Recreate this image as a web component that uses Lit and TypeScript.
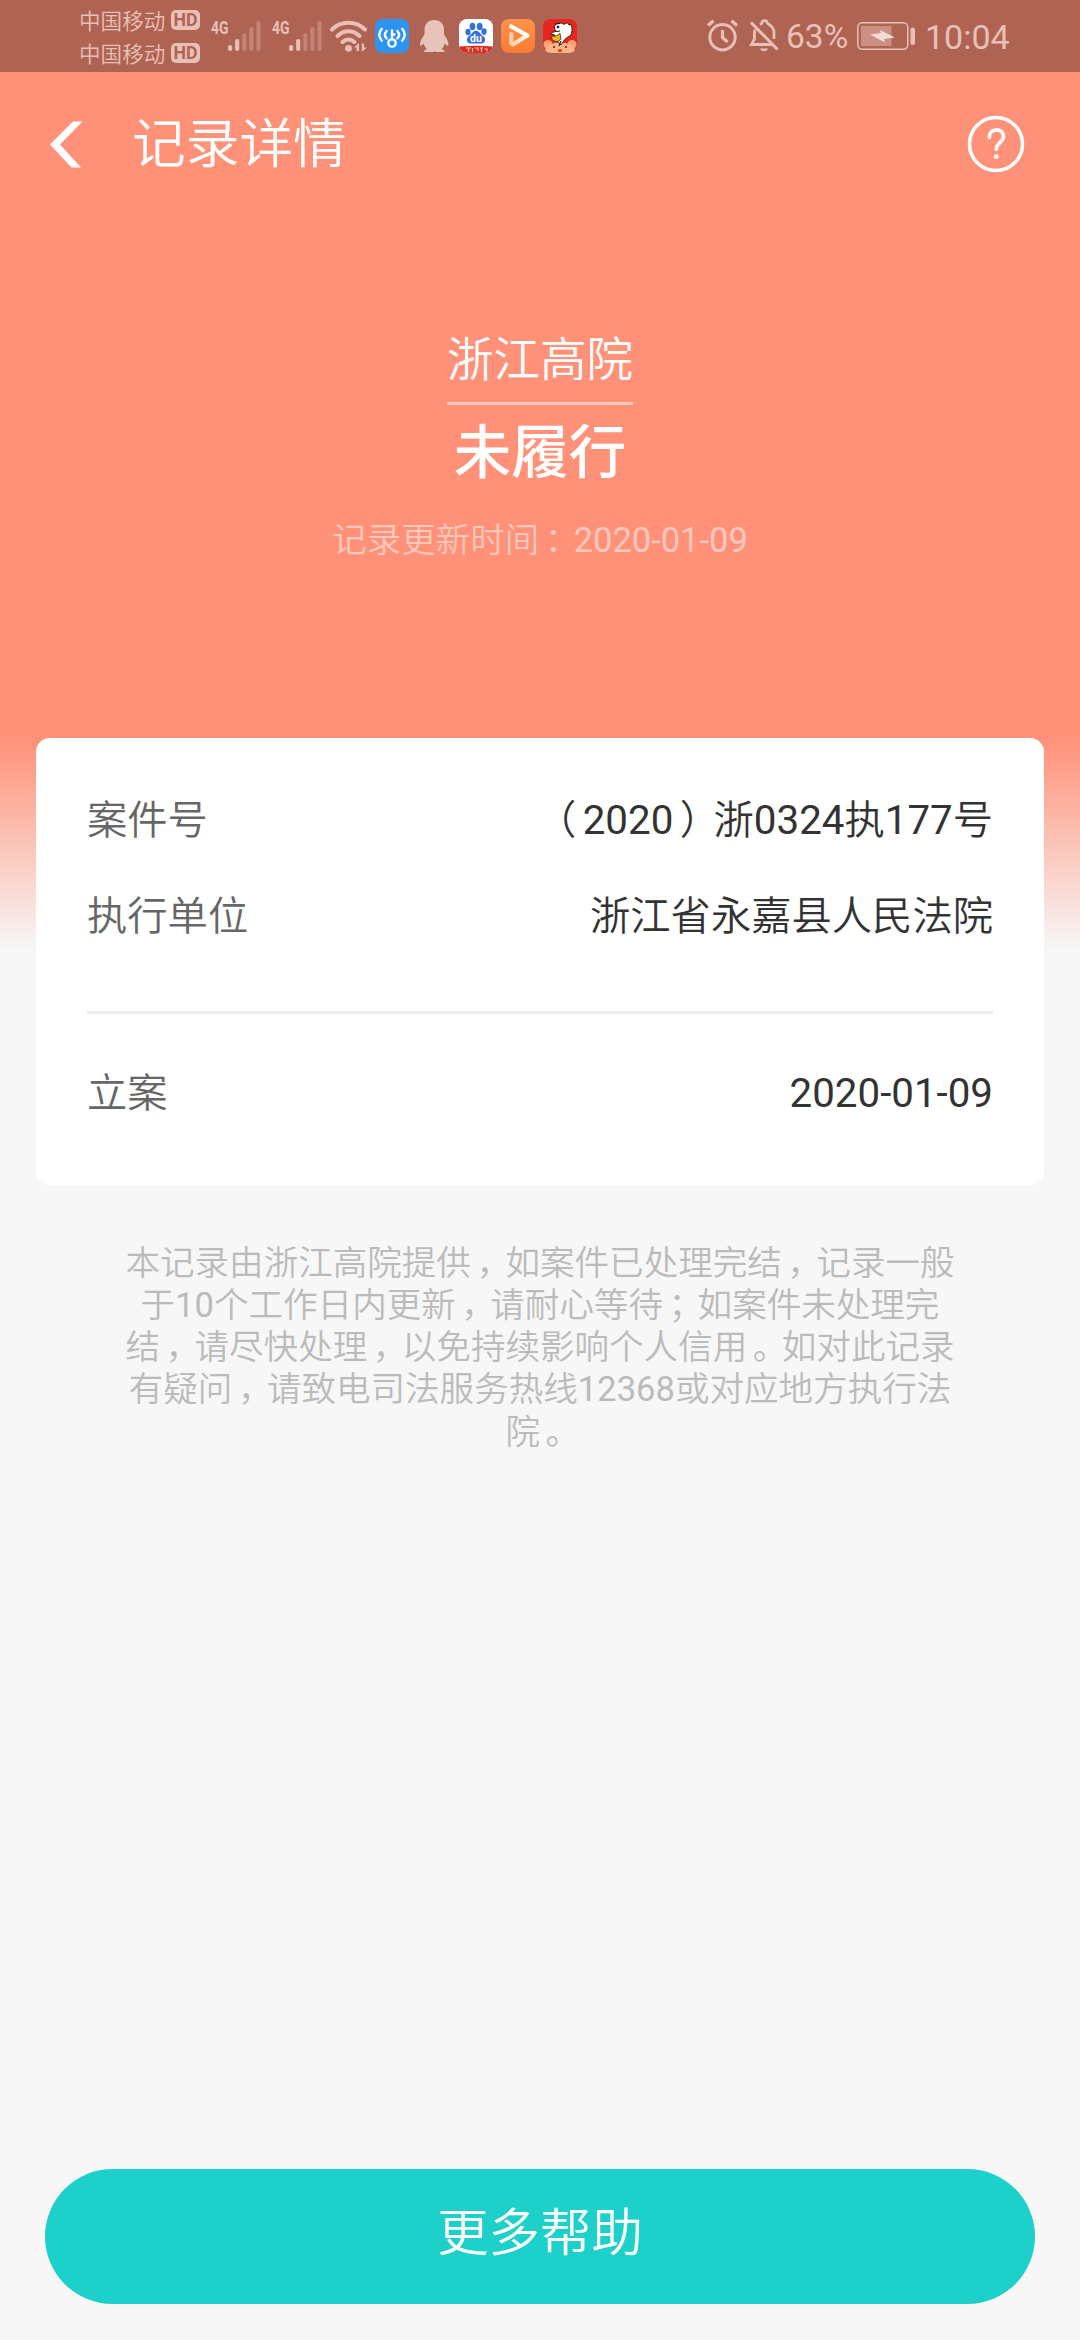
import { LitElement, html, css, svg } from 'lit';
import { customElement, property } from 'lit/decorators.js';

const SIGNAL_BARS = [6, 12, 18, 24, 30];

const NOTE_LINES = [
    '本记录由浙江高院提供，如案件已处理完结，记录一般',
    '于10个工作日内更新，请耐心等待；如案件未处理完',
    '结，请尽快处理，以免持续影响个人信用。如对此记录',
    '有疑问，请致电司法服务热线12368或对应地方执行法',
    '院。',
];

@customElement('status-bar')
export class StatusBar extends LitElement {
    static styles = css`
        :host {
            display: flex;
            align-items: center;
            box-sizing: border-box;
            height: 72px;
            padding: 0 70px 0 79px;
            background: #ae6353;
            color: #e9c0b6;
            font-family: Roboto, "Noto Sans CJK SC", sans-serif;
        }
        svg {
            display: block;
            flex: none;
            overflow: visible;
        }
        .carriers {
            display: flex;
            flex-direction: column;
            width: 132px;
        }
        .carrier {
            display: flex;
            align-items: center;
            gap: 6px;
            height: 33px;
            font-family: "Noto Sans CJK SC DemiLight", "Noto Sans CJK SC", sans-serif;
            font-size: 21.6px;
            line-height: 33px;
            white-space: nowrap;
        }
        .signal {
            margin-right: 11px;
        }
        .wifi {
            margin: 0 8px 0 -3px;
        }
        .app {
            margin-right: 8px;
        }
        .spacer {
            flex: 1;
        }
        .alarm {
            margin-right: 12px;
        }
        .bell {
            margin-right: 7px;
        }
        .percent {
            width: 71px;
            font-size: 33.5px;
            line-height: 72px;
            padding-top: 2px;
        }
        .battery {
            margin-right: 9px;
        }
        .time {
            width: 85px;
            font-size: 34px;
            line-height: 72px;
            padding-top: 2px;
        }
        .badge-text {
            font-family: Roboto, sans-serif;
            font-weight: 700;
        }
    `;

    renderCarrier() {
        return html`
            <div class="carrier">
                <span>中国移动</span>
                <svg width="29" height="20" viewBox="0 0 29 20">
                    <rect width="29" height="20" rx="5" fill="#e9c0b6" />
                    <text class="badge-text" x="14.5" y="16.2" font-size="17.5" text-anchor="middle" textLength="24" lengthAdjust="spacingAndGlyphs" fill="#ae6353">HD</text>
                </svg>
            </div>
        `;
    }

    renderSignal() {
        return html`
            <svg class="signal" width="50" height="34" viewBox="0 0 50 34">
                <text class="badge-text" x="0" y="15" font-size="18.5" textLength="17.5" lengthAdjust="spacingAndGlyphs" fill="#e9c0b6">4G</text>
                ${SIGNAL_BARS.map((h, i) => svg`
                    <rect x=${17 + i * 7.1} y=${32 - h} width="4.2" height=${h} rx="2" fill=${i < 2 ? '#e9c0b6' : '#c38375'} />
                `)}
            </svg>
        `;
    }

    render() {
        return html`
            <div class="carriers">
                ${this.renderCarrier()}
                ${this.renderCarrier()}
            </div>
            ${this.renderSignal()}
            ${this.renderSignal()}
            <svg class="wifi" width="37" height="34" viewBox="0 0 37 34" fill="none" stroke="#e9c0b6" stroke-width="4" stroke-linecap="round">
                <path d="M2 10.500C11 1.500 26 1.500 35 10.500" />
                <path d="M7.500 17C14 10.500 23 10.500 29.500 17" />
                <path d="M12.500 23C16 19.500 21 19.500 24.500 23" />
                <circle cx="18.500" cy="29.300" r="3.400" fill="#e9c0b6" stroke="none" />
                <path d="M24 28.500L29 24V32H26.600V28.500ZM37 28.500L31.800 32.800V24.500H34V28.500Z" fill="#e9c0b6" stroke="none" />
            </svg>
            <svg class="app" width="34" height="34" viewBox="0 0 34 34">
                <rect width="34" height="34" rx="8" fill="#2e94f2" />
                <g fill="none" stroke="#fff" stroke-width="2.300" stroke-linecap="round">
                    <circle cx="17" cy="24" r="3.700" />
                    <path d="M17 20V11.500M17 15.500H19.500M11.700 12C9.300 14.500 9.300 17 11.700 19.500M22.300 12C24.700 14.500 24.700 17 22.300 19.500M6.800 9.800C3.700 13.500 3.700 18 6.800 21.700M27.200 9.800C30.300 13.500 30.300 18 27.200 21.700" />
                </g>
            </svg>
            <svg class="app" width="34" height="34" viewBox="0 0 34 34">
                <path d="M17.200 1C10.500 1 7.500 5.500 7.500 11V15.500C5.500 18 3.200 22 3 25.500C3 27.500 4.200 27 6.800 24.500C7.300 26.800 8.300 28.700 10 30C8 30.800 7 31.500 7 33H17L18 32L19 33H27.500C27.500 31.500 26.400 30.800 24.500 30C26.200 28.700 27.200 26.800 27.700 24.500C30 27 31.500 27.500 31.500 25.500C31.300 22 29 18 27 15.500V11C27 5.500 24 1 17.200 1Z" fill="#e6c3bb" />
            </svg>
            <svg class="app" width="34" height="34" viewBox="0 0 34 34">
                <clipPath id="tile"><rect width="34" height="34" rx="8" /></clipPath>
                <g clip-path="url(#tile)">
                    <rect width="34" height="34" fill="#fff" />
                    <g fill="#3370d8">
                        <ellipse cx="13.500" cy="7.500" rx="2.900" ry="3.700" />
                        <ellipse cx="20.700" cy="7.500" rx="2.900" ry="3.700" />
                        <ellipse cx="9" cy="13" rx="2.600" ry="3.300" />
                        <ellipse cx="25" cy="12.600" rx="2.600" ry="3.300" />
                        <path d="M17 11.800C20 11.800 21 15 24 17C27.500 19.500 26.500 24.500 22 24.500H12C7.500 24.500 6.500 19.500 10 17C13 15 14 11.800 17 11.800Z" />
                    </g>
                    <text class="badge-text" x="17" y="23" font-size="10.500" text-anchor="middle" fill="#fff">du</text>
                    <path d="M0 27.500Q17 26 34 27.500V34H0Z" fill="#dd2b20" />
                    <path d="M7 29H12M9.500 29V33M13.500 29V33M16 29H19V32M21 29H24M22.500 29V33M25.500 30H28V32.500" stroke="#f6bdb4" stroke-width="1.200" fill="none" />
                </g>
            </svg>
            <svg class="app" width="34" height="34" viewBox="0 0 34 34">
                <defs>
                    <linearGradient id="play" x1="0" y1="0" x2="0" y2="1">
                        <stop offset="0" stop-color="#fc9447" />
                        <stop offset="1" stop-color="#f97b33" />
                    </linearGradient>
                    <linearGradient id="fade" x1="1" y1="0" x2="0" y2="0.600">
                        <stop offset="0" stop-color="#fff" />
                        <stop offset="1" stop-color="#ffd3ae" />
                    </linearGradient>
                </defs>
                <rect width="34" height="34" rx="8" fill="url(#play)" />
                <g fill="none" stroke-width="4.200" stroke-linecap="round" stroke-linejoin="round">
                    <path d="M10.300 15V24.500" stroke="#ffcda6" />
                    <path d="M26 16.500L12 25.500" stroke="url(#fade)" />
                    <path d="M10.300 7.500L26.500 16.500" stroke="#fff" />
                </g>
            </svg>
            <svg width="34" height="34" viewBox="0 0 34 34">
                <clipPath id="shop"><rect width="34" height="34" rx="8" /></clipPath>
                <g clip-path="url(#shop)">
                    <rect width="34" height="34" fill="#e8261f" />
                    <circle cx="5" cy="25.500" r="4.500" fill="#f6a173" />
                    <circle cx="29" cy="25.500" r="4.500" fill="#f6a173" />
                    <ellipse cx="17" cy="31.500" rx="15" ry="8" fill="#fbb583" />
                    <path d="M12 6C15 3.500 19 3.500 21 5.500L24 3.500L26 6L28 5.500C29.500 9 29.500 14 27 17C23 18.500 21 21 18 26L15 23L11 15.500L7.500 15C8.500 13 11 13 13 12.500C11.500 10.500 11 8 12 6Z" fill="#fff" stroke="#231513" stroke-width="0.900" />
                    <path d="M9 17C12 18 15 16 17 14.500L18 20L15 22.500C11 23 7.500 20.500 9 17Z" fill="#f4b41f" stroke="#3b2415" stroke-width="0.800" />
                    <circle cx="15" cy="8" r="1.300" fill="#231513" />
                    <path d="M12 5L17 4.500M13 12.500L17 12M18 22L16 27" stroke="#231513" stroke-width="1.100" />
                    <circle cx="11" cy="28" r="1" fill="#552317" />
                    <circle cx="23" cy="28" r="1" fill="#552317" />
                    <ellipse cx="17" cy="31.500" rx="2.200" ry="1.500" fill="#dc3a26" />
                </g>
            </svg>
            <div class="spacer"></div>
            <svg class="alarm" width="31" height="34" viewBox="0 0 31 34" fill="none" stroke="#e9c0b6" stroke-width="3">
                <circle cx="15.500" cy="18.200" r="12.700" />
                <path d="M15.500 11V18.500L20.500 23" stroke-width="3.200" />
                <path d="M1 6.500L6.500 1.700M30 6.500L24.500 1.700" stroke-width="3.400" />
            </svg>
            <svg class="bell" width="29" height="34" viewBox="0 0 29 34" fill="none" stroke="#e9c0b6" stroke-width="3">
                <path d="M1 3.500L27.500 30.500" />
                <path d="M5 10.500C4 13 4.500 17 4.500 20L1.500 25.500H22M10 5.500C11.500 4.500 12 4.500 12 3.500C12 1 17 1 17 3.500C17 5 23 6 24 12.500V20" stroke-width="2.800" />
                <path d="M10 29.500H18C17 33 11 33 10 29.500Z" fill="#e9c0b6" stroke="none" />
            </svg>
            <div class="percent">63%</div>
            <svg class="battery" width="59" height="30" viewBox="0 0 59 30">
                <rect x="0.800" y="1.800" width="50" height="26.500" rx="4.500" fill="none" stroke="#e9c0b6" stroke-width="1.500" />
                <rect x="4" y="5" width="30.500" height="20" fill="#cb9084" />
                <path d="M13 13.500L24 12L23 9L38 16.500L27 18L28 21.500Z" fill="#f2dcd6" />
                <rect x="53.500" y="6.500" width="4.500" height="17.500" rx="2" fill="#e9c0b6" />
            </svg>
            <div class="time">10:04</div>
        `;
    }
}

@customElement('record-row')
export class RecordRow extends LitElement {
    static styles = css`
        :host {
            display: flex;
            justify-content: space-between;
            align-items: center;
            height: 96px;
            font-size: 40.3px;
            line-height: 96px;
        }
        .label {
            color: #666;
        }
        .value {
            color: #333;
        }
    `;

    @property() label = '';

    render() {
        return html`
            <span class="label">${this.label}</span>
            <span class="value"><slot></slot></span>
        `;
    }
}

// full-width punctuation sits nearer the middle of its cell
function spaced(text: string) {
    return text.split(/([，。；：（）])/).map(part => {
        if (part === '（') return html`<span class="open">${part}</span>`;
        if (/^[，。；：）]$/.test(part)) return html`<span class="punct">${part}</span>`;
        return part;
    });
}

@customElement('app-root')
export class AppRoot extends LitElement {
    static styles = css`
        :host {
            display: flex;
            flex-direction: column;
            box-sizing: border-box;
            height: 2340px;
            width: 1080px;
            background: linear-gradient(#ff9178 738px, #f7f7f7 950px);
            font-family: Roboto, "Noto Sans CJK SC DemiLight", "Noto Sans CJK SC", sans-serif;
            font-weight: 400;
            overflow: hidden;
        }
        .nav {
            display: flex;
            align-items: center;
            height: 144px;
            padding: 0 55px 0 50px;
            color: #fff;
        }
        .back {
            width: 33px;
            height: 47px;
            margin-right: 49px;
        }
        .title {
            flex: 1;
            padding-top: 2px;
            font-size: 53.7px;
            line-height: 142px;
        }
        .help {
            width: 58px;
            height: 58px;
        }
        .hero {
            display: flex;
            flex-direction: column;
            align-items: center;
            height: 450px;
            padding-top: 72px;
            color: #fff;
        }
        .court {
            height: 114px;
            border-bottom: 3px solid #ffc8bc;
            font-size: 46.5px;
            line-height: 145px;
        }
        .status {
            height: 92px;
            font-family: "Noto Sans CJK SC", sans-serif;
            font-size: 57.5px;
            font-weight: 500;
            line-height: 86px;
        }
        .updated {
            margin-top: 16px;
            color: #ffc8bc;
            font-size: 34.5px;
            line-height: 55px;
        }
        /* half-width alternates, padded back to one em */
        .punct,
        .open {
            font-feature-settings: "halt";
        }
        .punct {
            padding: 0 0.34em 0 0.16em;
        }
        .open {
            padding: 0 0.16em 0 0.34em;
        }
        .card {
            margin: 0 36px;
            box-sizing: border-box;
            height: 447px;
            padding: 35px 51px 0;
            border-radius: 14px;
            background: #fff;
        }
        .divider {
            height: 3px;
            margin: 46px 0 32px;
            background: #eee;
        }
        .note {
            margin-top: 57px;
            color: #bbb;
            font-size: 34.55px;
            line-height: 42.15px;
            text-align: center;
        }
        .more {
            display: flex;
            justify-content: center;
            flex: none;
            height: 135px;
            margin: auto 45px 36px;
            padding: 0;
            border: none;
            border-radius: 68px;
            background: #1dd0c9;
            color: #fff;
            font-family: inherit;
            font-size: 51.4px;
            line-height: 129px;
        }
    `;

    render() {
        return html`
            <status-bar></status-bar>
            <div class="nav">
                <svg class="back" viewBox="0 0 33 47">
                    <path d="M23 0.500H32.500L10 23.500L31 46.500H21.500L0 23.500Z" fill="#fff" />
                </svg>
                <div class="title">记录详情</div>
                <svg class="help" viewBox="0 0 58 58" fill="none" stroke="#fff">
                    <circle cx="29" cy="29" r="26.500" stroke-width="3.600" />
                    <path d="M22.300 22.500C22 12.500 36.500 12.500 36.500 21.500C36.500 27 29.300 27.500 29.300 34.500" stroke-width="3.600" stroke-linecap="round" />
                    <circle cx="29.300" cy="41.700" r="2.400" fill="#fff" stroke="none" />
                </svg>
            </div>
            <div class="hero">
                <div class="court">浙江高院</div>
                <div class="status">未履行</div>
                <div class="updated">${spaced('记录更新时间：2020-01-09')}</div>
            </div>
            <div class="card">
                <record-row label="案件号">${spaced('（2020）浙0324执177号')}</record-row>
                <record-row label="执行单位">浙江省永嘉县人民法院</record-row>
                <div class="divider"></div>
                <record-row label="立案">2020-01-09</record-row>
            </div>
            <div class="note">
                ${NOTE_LINES.map(line => html`<div>${spaced(line)}</div>`)}
            </div>
            <button class="more">更多帮助</button>
        `;
    }
}
